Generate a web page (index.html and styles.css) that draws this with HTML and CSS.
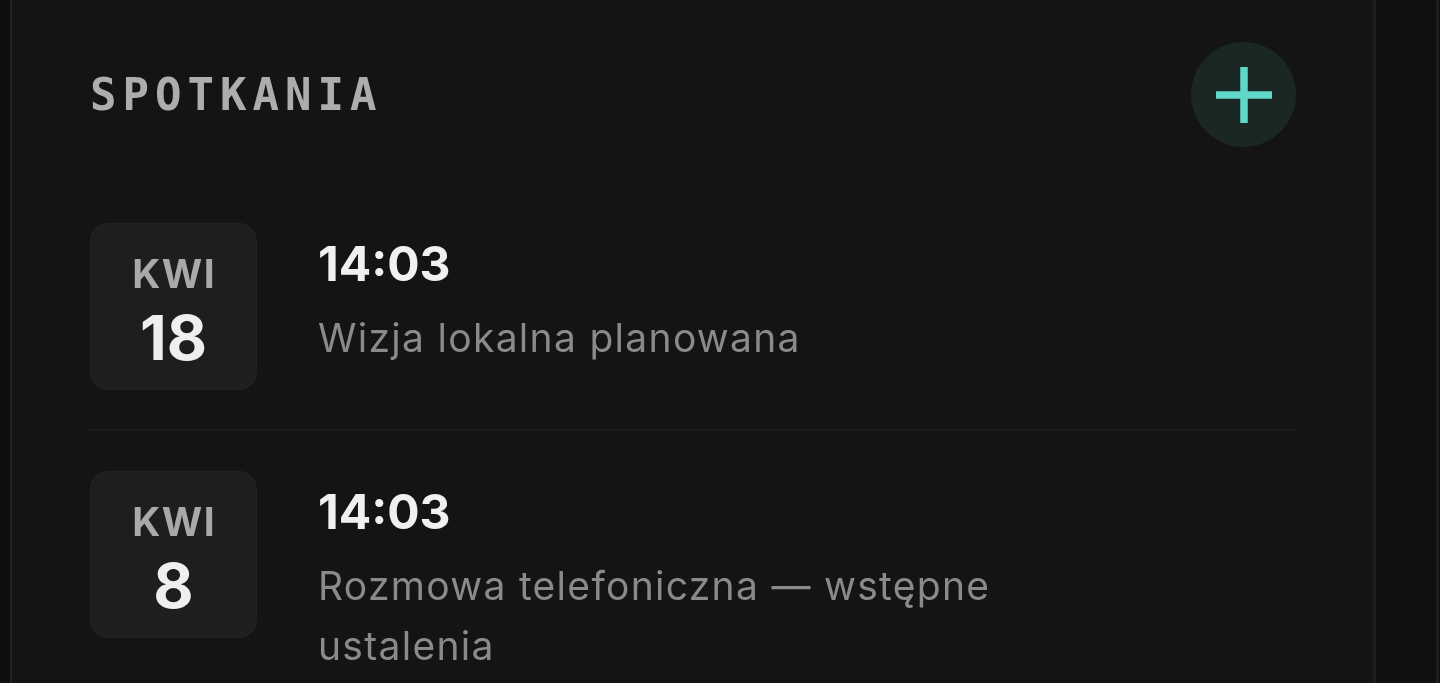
FILE: index.html
```html
<!DOCTYPE html>
<html lang="pl">
<head>
<meta charset="utf-8">
<title>Spotkania</title>
<link rel="stylesheet" href="styles.css">
</head>
<body>
<div class="page">
  <section class="panel">
    <header class="panel-head">
      <h2 class="panel-title">SPOTKANIA</h2>
      <button class="add-btn" aria-label="Dodaj spotkanie">
        <svg viewBox="0 0 56 56" width="56" height="56" aria-hidden="true">
          <path d="M28 0 V56 M0 28 H56" stroke="#5fd8c8" stroke-width="7.5" fill="none"/>
        </svg>
      </button>
    </header>
    <ul class="meetings">
      <li class="meeting">
        <div class="date-box">
          <span class="month">KWI</span>
          <span class="day">18</span>
        </div>
        <div class="meeting-info">
          <div class="time">14:03</div>
          <div class="desc">Wizja lokalna planowana</div>
        </div>
      </li>
      <li class="meeting">
        <div class="date-box">
          <span class="month">KWI</span>
          <span class="day">8</span>
        </div>
        <div class="meeting-info">
          <div class="time">14:03</div>
          <div class="desc">Rozmowa telefoniczna — wstępne ustalenia</div>
        </div>
      </li>
    </ul>
  </section>
  <aside class="rail"></aside>
</div>
</body>
</html>
```

FILE: styles.css
```css
* { box-sizing: border-box; }
html, body { margin: 0; padding: 0; }
body {
  background: #0f0f0f;
  font-family: Inter, "Noto Sans", "Liberation Sans", sans-serif;
  overflow: hidden;
}
.page {
  display: flex;
  height: 683px;
  padding-left: 10px;
  overflow: hidden;
  filter: blur(0.5px);
}
.panel {
  width: 1366px;
  flex: none;
  background: #141414;
  border-left: 2px solid #222222;
  border-right: 3px solid #1f1f1f;
  padding: 42px 77px 0 78px;
}
.rail {
  flex: 1;
  background: #101010;
  border-right: 3px solid #1d1d1d;
  margin-right: 1px;
}
.panel-head {
  display: flex;
  align-items: center;
  justify-content: space-between;
  height: 105px;
}
.panel-title {
  margin: 0;
  font-family: "DejaVu Sans Mono", "Liberation Mono", monospace;
  font-weight: 700;
  font-size: 44px;
  letter-spacing: 6px;
  color: #adadad;
}
.add-btn {
  width: 105px;
  height: 105px;
  border-radius: 50%;
  border: none;
  background: #1b2725;
  display: flex;
  align-items: center;
  justify-content: center;
  padding: 0;
}
.meetings {
  list-style: none;
  margin: 36px 0 0;
  padding: 0;
}
.meeting {
  display: flex;
  gap: 61px;
  padding: 40px 0 39px;
}
.meeting + .meeting {
  border-top: 2px solid #1c1c1c;
  padding-top: 40px;
}
.date-box {
  width: 167px;
  height: 167px;
  flex: none;
  background: #1e1e1e;
  border: 2px solid #212121;
  border-radius: 18px;
  padding-top: 9px;
  display: flex;
  flex-direction: column;
  align-items: center;
  justify-content: center;
}
.month {
  font-size: 39px;
  line-height: 1;
  font-weight: 700;
  letter-spacing: 1.5px;
  margin-left: 1.5px;
  color: #a9a9a9;
}
.day {
  font-size: 62px;
  line-height: 1;
  font-weight: 700;
  color: #efefef;
  margin-top: 14px;
}
.meeting-info {
  padding-top: 12px;
  max-width: 720px;
}
.time {
  font-size: 48px;
  line-height: 58px;
  font-weight: 700;
  color: #f0f0f0;
}
.desc {
  margin-top: 15px;
  font-size: 39px;
  line-height: 60px;
  letter-spacing: 1.3px;
  color: #8a8a8a;
}
```
